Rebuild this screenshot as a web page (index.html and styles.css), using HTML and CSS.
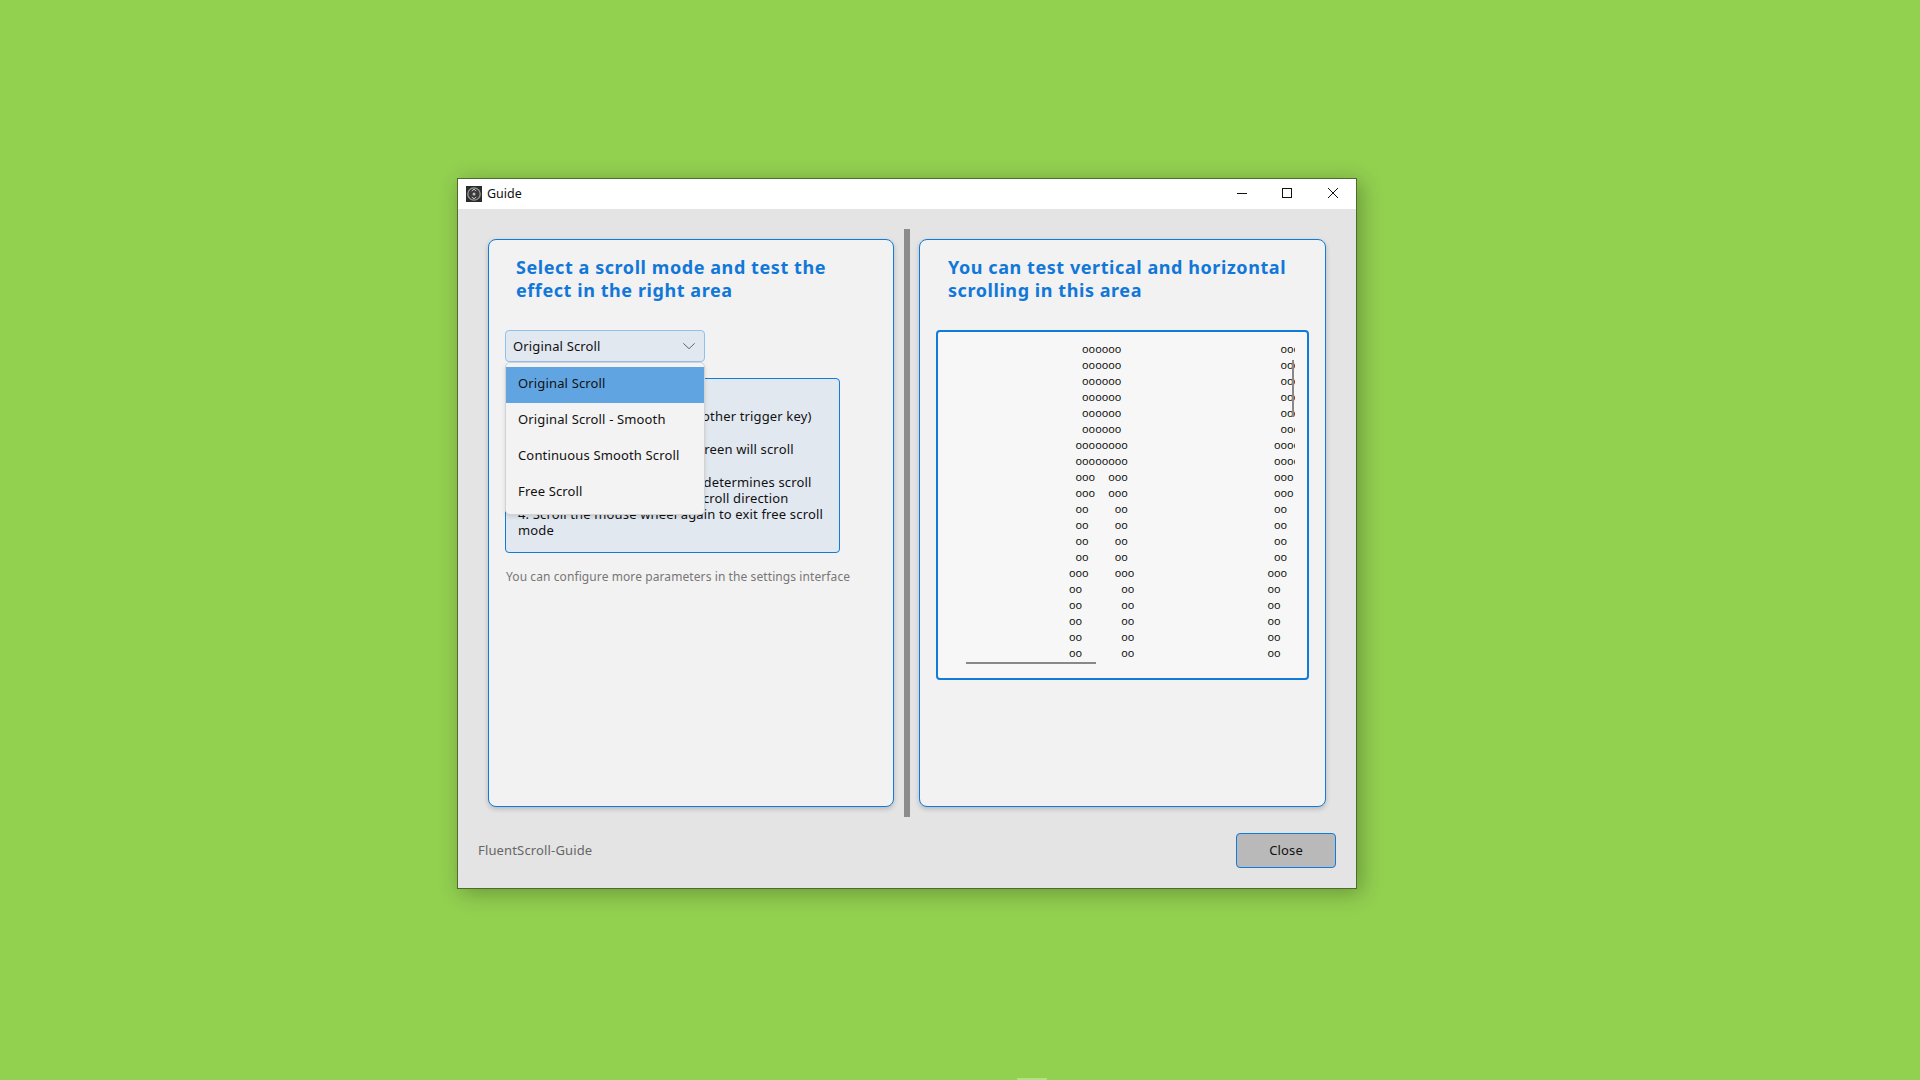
FILE: index.html
```html
<!DOCTYPE html>
<html lang="en">
<head>
<meta charset="utf-8">
<title>Guide</title>
<link rel="stylesheet" href="styles.css">
</head>
<body>
<div class="desk-spot"></div>
<main class="window">
  <header class="titlebar">
    <svg class="app-icon" viewBox="0 0 16 16" width="16" height="16">
      <rect width="16" height="16" fill="#2b2b2b"/>
      <circle cx="8" cy="8" r="6.2" fill="#3a3a3a" stroke="#9a9a9a" stroke-width="1.3"/>
      <circle cx="8" cy="8" r="1.5" fill="#bdbdbd"/>
      <path d="M5.8 5 8 3.2 10.2 5M5.8 11 8 12.8 10.2 11" fill="none" stroke="#c8c8c8" stroke-width="1"/>
    </svg>
    <span class="title-text">Guide</span>
    <div class="win-controls">
      <svg class="win-btn" viewBox="0 0 46 30" width="46" height="30"><path d="M19 14.500h10" stroke="#111" fill="none"/></svg>
      <svg class="win-btn" viewBox="0 0 46 30" width="46" height="30"><rect x="18.500" y="9.500" width="9" height="9" stroke="#111" fill="none"/></svg>
      <svg class="win-btn" viewBox="0 0 46 30" width="46" height="30"><path d="M18 9l10 10M28 9l-10 10" stroke="#111" fill="none"/></svg>
    </div>
  </header>
  <div class="window-body">
    <div class="panes">
      <section class="pane">
        <div class="card">
          <h2 class="card-title">Select a scroll mode and test the<br>effect in the right area</h2>
          <div class="combo-wrap">
            <div class="combo">
              <span>Original Scroll</span>
              <svg class="chevron" viewBox="0 0 12 6" width="12" height="6"><path d="M0.300 0.300 6 5.700 11.700 0.300" fill="none" stroke="#666"/></svg>
            </div>
            <ul class="dropdown">
              <li class="dropdown-item selected">Original Scroll</li>
              <li class="dropdown-item">Original Scroll - Smooth</li>
              <li class="dropdown-item">Continuous Smooth Scroll</li>
              <li class="dropdown-item">Free Scroll</li>
            </ul>
          </div>
          <div class="info">
            <p class="info-line">Free Scroll usage:</p>
            <p class="info-line gap">1. Press the middle wheel (or other trigger key)</p>
            <p class="info-line gap">2. Move the mouse and the screen will scroll</p>
            <p class="info-line">3. Distance from center point determines scroll speed, direction determines scroll direction</p>
            <p class="info-line">4. Scroll the mouse wheel again to exit free scroll mode</p>
          </div>
          <p class="note">You can configure more parameters in the settings interface</p>
        </div>
      </section>
      <div class="splitter"></div>
      <section class="pane pane-right">
        <div class="card">
          <h2 class="card-title">You can test vertical and horizontal<br>scrolling in this area</h2>
          <div class="test-area">
            <div class="test-clip"><pre class="art">  oooooo
  oooooo
  oooooo
  oooooo
  oooooo
  oooooo
 oooooooo
 oooooooo
 ooo  ooo
 ooo  ooo
 oo    oo
 oo    oo
 oo    oo
 oo    oo
ooo    ooo
oo      oo
oo      oo
oo      oo
oo      oo
oo      oo</pre><pre class="art">  oooooo
  oooooo
  oooooo
  oooooo
  oooooo
  oooooo
 oooooooo
 oooooooo
 ooo  ooo
 ooo  ooo
 oo    oo
 oo    oo
 oo    oo
 oo    oo
ooo    ooo
oo      oo
oo      oo
oo      oo
oo      oo
oo      oo</pre></div>
            <div class="thumb-v"></div>
            <div class="thumb-h"></div>
          </div>
        </div>
      </section>
    </div>
    <footer class="footer">
      <span class="footer-label">FluentScroll-Guide</span>
      <button class="close-btn" type="button">Close</button>
    </footer>
  </div>
</main>
</body>
</html>
```

FILE: styles.css
```css
* { box-sizing: border-box; }
html, body { margin: 0; height: 100%; }
body {
  background: #92d050;
  font-family: "Noto Sans", "Open Sans", sans-serif;
  font-size: 13px;
  letter-spacing: 0.15px;
  color: #111;
  overflow: hidden;
  position: relative;
}
.desk-spot {
  position: absolute;
  left: 1017px;
  top: 1078px;
  width: 30px;
  height: 2px;
  background: #b4e085;
}
.window {
  position: absolute;
  left: 457px;
  top: 178px;
  width: 900px;
  height: 711px;
  border: 1px solid #4f6b2c;
  background: #e4e4e4;
  box-shadow: 4px 4px 20px rgba(0, 0, 0, 0.28);
  display: flex;
  flex-direction: column;
}
.titlebar {
  height: 30px;
  background: #fff;
  display: flex;
  align-items: center;
  padding-left: 8px;
}
.app-icon { flex: none; }
.title-text { margin: 0 0 2px 5px; font-size: 12.5px; letter-spacing: 0; }
.win-controls { margin-left: auto; display: flex; }
.win-btn { display: block; }
.window-body {
  flex: 1;
  display: flex;
  flex-direction: column;
  padding: 20px 20px 0;
}
.panes { display: flex; height: 588px; }
.pane { width: 426px; padding: 10px; display: flex; }
.pane-right { padding: 10px 11px 10px 9px; }
.splitter { width: 6px; background: #8c8c8c; }
.card {
  flex: 1;
  background: #f2f2f2;
  border: 1px solid #0f7bdb;
  border-radius: 8px;
  padding: 16px;
  box-shadow: 0 2px 5px rgba(0, 0, 0, 0.2);
}
.card-title {
  margin: 0 0 28px 11px;
  color: #1177d8;
  font-size: 18px;
  font-weight: 700;
  line-height: 23px;
  letter-spacing: 0.57px;
  white-space: nowrap;
}
.pane-right .card-title { margin-left: 12px; }
.combo-wrap { position: relative; width: 200px; }
.combo {
  height: 32px;
  background: #e1e8f0;
  border: 1px solid #8fc1ef;
  border-radius: 4px;
  display: flex;
  align-items: center;
  justify-content: space-between;
  padding: 0 9px 0 7px;
}
.dropdown {
  position: absolute;
  left: 0;
  top: 32px;
  width: 200px;
  height: 153px;
  margin: 0;
  padding: 4px 0 0;
  list-style: none;
  background: #f3f3f3;
  border: 1px solid #d2d2d2;
  border-radius: 5px;
  box-shadow: 0 2px 4px rgba(0, 0, 0, 0.12);
  z-index: 2;
}
.dropdown-item {
  height: 36px;
  line-height: 33px;
  padding-left: 12px;
}
.dropdown-item.selected { background: #60a5e2; }
.info {
  width: 335px;
  height: 175px;
  margin-top: 16px;
  padding: 13px 12px 0;
  background: #e1e8f0;
  border: 1px solid #0f7bdb;
  border-radius: 4px;
}
.info-line { margin: 0; line-height: 16px; }
.info-line.gap { margin-bottom: 17px; }
.note { margin: 16px 0 0 1px; color: #777; font-size: 12px; letter-spacing: 0.09px; line-height: 16px; white-space: nowrap; }
.test-area {
  position: relative;
  width: 373px;
  height: 350px;
  background: #f7f7f7;
  border: 2px solid #0f7bdb;
  border-radius: 4px;
  padding: 9px 12px 0;
}
.test-clip {
  display: flex;
  overflow: hidden;
  height: 327px;
  padding-left: 119px;
}
.art {
  flex: none;
  width: 198.4px;
  margin: 0;
  font-family: "Noto Sans", sans-serif;
  font-size: 10.8px;
  letter-spacing: 0;
  word-spacing: 3.73px;
  line-height: 16px;
  color: #111;
}
.thumb-v {
  position: absolute;
  left: 354px;
  top: 28px;
  width: 2px;
  height: 57px;
  background: #888;
}
.thumb-h {
  position: absolute;
  left: 28px;
  top: 330px;
  width: 130px;
  height: 2px;
  background: #888;
}
.footer {
  display: flex;
  align-items: center;
  justify-content: space-between;
  padding-top: 16px;
}
.footer-label { color: #666; margin-bottom: 2px; }
.close-btn {
  width: 100px;
  height: 35px;
  background: #b9b9b9;
  border: 1px solid #0f7bdb;
  border-radius: 4px;
  font: inherit;
  letter-spacing: inherit;
  color: #111;
  padding: 0 0 2px;
}
```
